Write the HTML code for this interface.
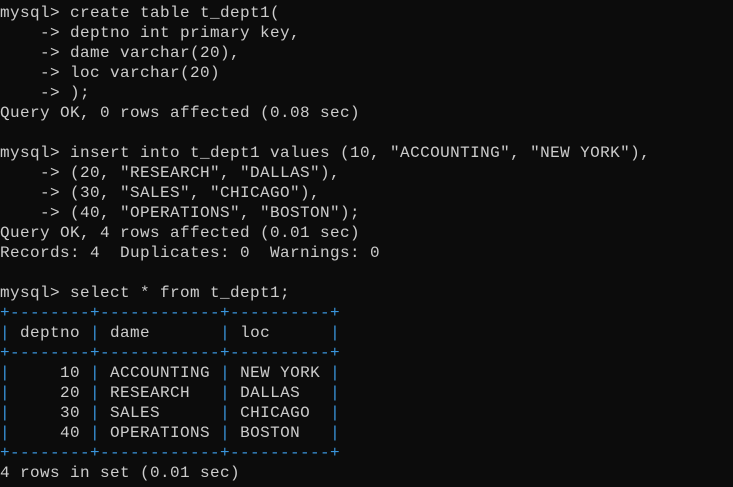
<!DOCTYPE html>
<html><head><style>
html,body{margin:0;padding:0;background:#0c0c0c;width:733px;height:487px;overflow:hidden}
pre{margin:0;position:absolute;left:0;top:3px;font-family:"Liberation Mono",monospace;font-size:16px;letter-spacing:0.4px;line-height:20px;color:#cccccc}
.b{color:#3a96dd}
</style></head><body>
<pre>mysql&gt; create table t_dept1(
    -&gt; deptno int primary key,
    -&gt; dame varchar(20),
    -&gt; loc varchar(20)
    -&gt; );
Query OK, 0 rows affected (0.08 sec)

mysql&gt; insert into t_dept1 values (10, "ACCOUNTING", "NEW YORK"),
    -&gt; (20, "RESEARCH", "DALLAS"),
    -&gt; (30, "SALES", "CHICAGO"),
    -&gt; (40, "OPERATIONS", "BOSTON");
Query OK, 4 rows affected (0.01 sec)
Records: 4  Duplicates: 0  Warnings: 0

mysql&gt; select * from t_dept1;
<span class="b">+--------+------------+----------+</span>
<span class="b">|</span> deptno <span class="b">|</span> dame       <span class="b">|</span> loc      <span class="b">|</span>
<span class="b">+--------+------------+----------+</span>
<span class="b">|</span>     10 <span class="b">|</span> ACCOUNTING <span class="b">|</span> NEW YORK <span class="b">|</span>
<span class="b">|</span>     20 <span class="b">|</span> RESEARCH   <span class="b">|</span> DALLAS   <span class="b">|</span>
<span class="b">|</span>     30 <span class="b">|</span> SALES      <span class="b">|</span> CHICAGO  <span class="b">|</span>
<span class="b">|</span>     40 <span class="b">|</span> OPERATIONS <span class="b">|</span> BOSTON   <span class="b">|</span>
<span class="b">+--------+------------+----------+</span>
4 rows in set (0.01 sec)
</pre>
</body></html>
